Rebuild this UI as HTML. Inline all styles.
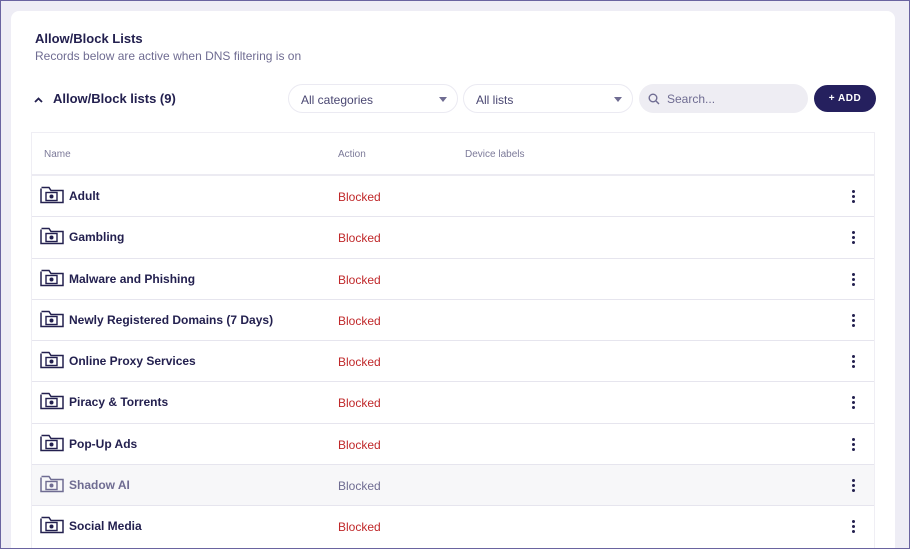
<!DOCTYPE html>
<html><head><meta charset="utf-8"><style>
*{box-sizing:border-box;margin:0;padding:0}
html,body{width:910px;height:549px;overflow:hidden}
body{background:#eeedf5;font-family:"Liberation Sans",sans-serif;position:relative;color:#23204f}
.frame{position:absolute;left:0;top:0;width:910px;height:549px;border:1px solid #6a64a0;z-index:5;pointer-events:none}
.card{position:absolute;left:11px;top:11px;width:884px;height:560px;background:#fff;border-radius:8px}
.t1{position:absolute;left:35px;top:31px;font-size:13px;font-weight:bold;color:#23204f}
.t2{position:absolute;left:35px;top:49px;font-size:12px;color:#6f6c92}
.t3{position:absolute;left:34px;top:91px;font-size:13px;font-weight:bold;color:#23204f}
.t3 svg{vertical-align:middle;margin-right:10px}
.sel{position:absolute;top:84px;height:29px;border:1px solid #ebeaf2;border-radius:15px;font-size:12px;color:#4a4772;padding:8px 0 0 12px}
.sel:after{content:"";position:absolute;right:10px;top:12px;border:4px solid transparent;border-top:5px solid #6f6c92}
.search{position:absolute;left:639px;top:84px;width:169px;height:29px;background:#eeedf3;border-radius:15px;font-size:12px;color:#6f6c92;padding:8px 0 0 28px}
.search svg{position:absolute;left:9px;top:9px}
.add{position:absolute;left:814px;top:85px;width:62px;height:27px;background:#25205e;border-radius:14px;color:#fff;font-size:10px;font-weight:bold;letter-spacing:.5px;display:flex;align-items:center;justify-content:center}
.tbl{position:absolute;left:31px;top:132px;width:844px;border:1px solid #efeef4;border-bottom:none}
.hd{height:43px;border-bottom:2px solid #ecebf2;font-size:10px;color:#7c7a99;position:relative}
.hd span{position:absolute;top:16px}
.row{height:41.3px;border-bottom:1px solid #e6e5ee;position:relative;font-size:12px}
.row .ic{position:absolute;left:8px;top:10px}
.row .n{position:absolute;left:37px;top:13px;font-weight:bold;color:#23204f}
.row .a{position:absolute;left:306px;top:14px;color:#c0282a}
.row .d{position:absolute;right:19px;top:14px;width:3px}
.row .d i{display:block;width:3px;height:3px;border-radius:50%;background:#23204f;margin-bottom:2px}
.row.dis{background:#f7f7f9}
.row.dis .n{color:#6f6c92}
.row.dis .a{color:#6f6c92}
</style></head><body>
<div class="frame"></div>
<div class="card"></div>
<div class="t1">Allow/Block Lists</div>
<div class="t2">Records below are active when DNS filtering is on</div>
<div class="t3"><svg width="9" height="6" viewBox="0 0 9 6"><path d="M1 5L4.5 1.5L8 5" stroke="#23204f" stroke-width="1.8" fill="none"/></svg>Allow/Block lists (9)</div>
<div class="sel" style="left:288px;width:170px">All categories</div>
<div class="sel" style="left:463px;width:170px">All lists</div>
<div class="search"><svg width="12" height="12" viewBox="0 0 12 12"><circle cx="5" cy="5" r="3.8" stroke="#6f6c92" stroke-width="1.4" fill="none"/><path d="M8 8L11 11" stroke="#6f6c92" stroke-width="1.4"/></svg>Search...</div>
<div class="add">+ ADD</div>
<div class="tbl">
<div class="hd"><span style="left:12px">Name</span><span style="left:306px">Action</span><span style="left:433px">Device labels</span></div>
<div class="row"><svg class="ic" width="24" height="18" viewBox="0 0 24 18"><path d="M1 2.5V16.5H23V4.5H11L9 1.5H1.5" stroke="#23204f" stroke-width="1.5" fill="none"/><rect x="6" y="6.5" width="11" height="8" stroke="#23204f" stroke-width="1.4" fill="none"/><circle cx="11.5" cy="10.5" r="2" fill="#23204f"/></svg><span class="n">Adult</span><span class="a">Blocked</span><span class="d"><i></i><i></i><i></i></span></div>
<div class="row"><svg class="ic" width="24" height="18" viewBox="0 0 24 18"><path d="M1 2.5V16.5H23V4.5H11L9 1.5H1.5" stroke="#23204f" stroke-width="1.5" fill="none"/><rect x="6" y="6.5" width="11" height="8" stroke="#23204f" stroke-width="1.4" fill="none"/><circle cx="11.5" cy="10.5" r="2" fill="#23204f"/></svg><span class="n">Gambling</span><span class="a">Blocked</span><span class="d"><i></i><i></i><i></i></span></div>
<div class="row"><svg class="ic" width="24" height="18" viewBox="0 0 24 18"><path d="M1 2.5V16.5H23V4.5H11L9 1.5H1.5" stroke="#23204f" stroke-width="1.5" fill="none"/><rect x="6" y="6.5" width="11" height="8" stroke="#23204f" stroke-width="1.4" fill="none"/><circle cx="11.5" cy="10.5" r="2" fill="#23204f"/></svg><span class="n">Malware and Phishing</span><span class="a">Blocked</span><span class="d"><i></i><i></i><i></i></span></div>
<div class="row"><svg class="ic" width="24" height="18" viewBox="0 0 24 18"><path d="M1 2.5V16.5H23V4.5H11L9 1.5H1.5" stroke="#23204f" stroke-width="1.5" fill="none"/><rect x="6" y="6.5" width="11" height="8" stroke="#23204f" stroke-width="1.4" fill="none"/><circle cx="11.5" cy="10.5" r="2" fill="#23204f"/></svg><span class="n">Newly Registered Domains (7 Days)</span><span class="a">Blocked</span><span class="d"><i></i><i></i><i></i></span></div>
<div class="row"><svg class="ic" width="24" height="18" viewBox="0 0 24 18"><path d="M1 2.5V16.5H23V4.5H11L9 1.5H1.5" stroke="#23204f" stroke-width="1.5" fill="none"/><rect x="6" y="6.5" width="11" height="8" stroke="#23204f" stroke-width="1.4" fill="none"/><circle cx="11.5" cy="10.5" r="2" fill="#23204f"/></svg><span class="n">Online Proxy Services</span><span class="a">Blocked</span><span class="d"><i></i><i></i><i></i></span></div>
<div class="row"><svg class="ic" width="24" height="18" viewBox="0 0 24 18"><path d="M1 2.5V16.5H23V4.5H11L9 1.5H1.5" stroke="#23204f" stroke-width="1.5" fill="none"/><rect x="6" y="6.5" width="11" height="8" stroke="#23204f" stroke-width="1.4" fill="none"/><circle cx="11.5" cy="10.5" r="2" fill="#23204f"/></svg><span class="n">Piracy &amp; Torrents</span><span class="a">Blocked</span><span class="d"><i></i><i></i><i></i></span></div>
<div class="row"><svg class="ic" width="24" height="18" viewBox="0 0 24 18"><path d="M1 2.5V16.5H23V4.5H11L9 1.5H1.5" stroke="#23204f" stroke-width="1.5" fill="none"/><rect x="6" y="6.5" width="11" height="8" stroke="#23204f" stroke-width="1.4" fill="none"/><circle cx="11.5" cy="10.5" r="2" fill="#23204f"/></svg><span class="n">Pop-Up Ads</span><span class="a">Blocked</span><span class="d"><i></i><i></i><i></i></span></div>
<div class="row dis"><svg class="ic" width="24" height="18" viewBox="0 0 24 18"><path d="M1 2.5V16.5H23V4.5H11L9 1.5H1.5" stroke="#6f6c92" stroke-width="1.5" fill="none"/><rect x="6" y="6.5" width="11" height="8" stroke="#6f6c92" stroke-width="1.4" fill="none"/><circle cx="11.5" cy="10.5" r="2" fill="#6f6c92"/></svg><span class="n">Shadow AI</span><span class="a">Blocked</span><span class="d"><i></i><i></i><i></i></span></div>
<div class="row" style="border-bottom:none"><svg class="ic" width="24" height="18" viewBox="0 0 24 18"><path d="M1 2.5V16.5H23V4.5H11L9 1.5H1.5" stroke="#23204f" stroke-width="1.5" fill="none"/><rect x="6" y="6.5" width="11" height="8" stroke="#23204f" stroke-width="1.4" fill="none"/><circle cx="11.5" cy="10.5" r="2" fill="#23204f"/></svg><span class="n">Social Media</span><span class="a">Blocked</span><span class="d"><i></i><i></i><i></i></span></div>
</div>
</body></html>
